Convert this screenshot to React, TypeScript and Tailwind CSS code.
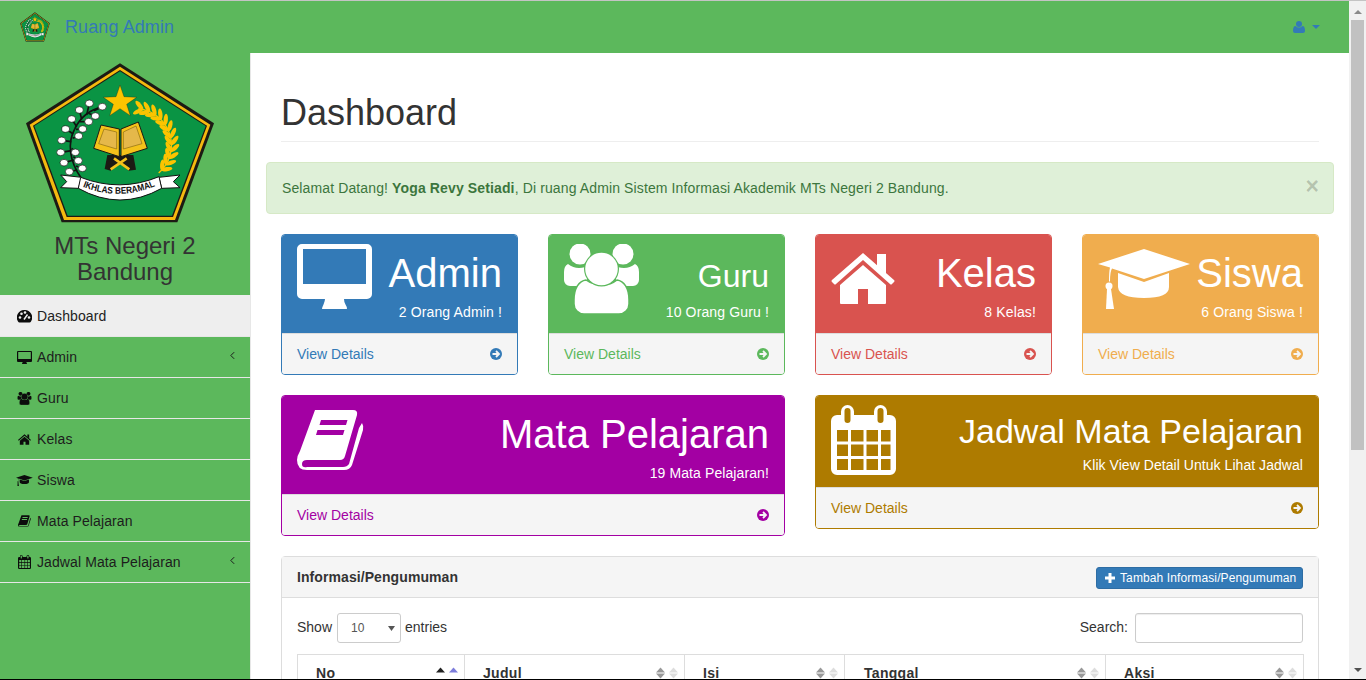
import type { ReactNode } from 'react';

type IconProps = { className?: string };

function MonitorIcon({ className }: IconProps) {
  return (
    <svg viewBox="0 0 75 65" className={className} fill="currentColor">
      <path
        fillRule="evenodd"
        d="M5 0h65a5 5 0 0 1 5 5v45a5 5 0 0 1-5 5H47q0 3 1.5 5.5t1.5 4q0 .5-1 .5H26q-1 0-1-.5t1.500-4T28 55H5a5 5 0 0 1-5-5V5a5 5 0 0 1 5-5zM6 5v35h63V5z"
      />
    </svg>
  );
}

function UsersIcon({ className }: IconProps) {
  return (
    <svg viewBox="0 0 75 70" className={className} fill="currentColor">
      <circle cx="16" cy="10" r="10.500" />
      <circle cx="59" cy="10" r="10.500" />
      <path d="M4 20q5 4 11 4 6 0 10-3l-3 21H6a6 6 0 0 1-6-6v-8q0-6 4-8z" />
      <path d="M71 20q-5 4-11 4-6 0-10-3l3 21h16a6 6 0 0 0 6-6v-8q0-6-4-8z" />
      <path
        className="stroke-[#5cb85c]"
        strokeWidth="1.500"
        d="M10 56C10 44 15 37 22 36q7 5 16 5t15-5c7 1 12 8 12 20v4a10 10 0 0 1-10 10H20a10 10 0 0 1-10-10z"
      />
      <circle cx="37.500" cy="25" r="17.500" className="fill-[#5cb85c]" />
      <circle cx="37.500" cy="25" r="16.300" />
    </svg>
  );
}

function HomeIcon({ className }: IconProps) {
  return (
    <svg viewBox="0 0 64 51" className={className} fill="currentColor">
      <path d="M46 1h9v20l-9-8z" />
      <path d="M32 0l31 27q1 1 0 2l-2 2q-1 1-2 0L32 7 5 31q-1 1-2 0l-2-2q-1-1 0-2z" />
      <path
        fillRule="evenodd"
        d="M32 12l23 20v18q0 1-1 1H10q-1 0-1-1V32zM27 36v15h10V36z"
      />
    </svg>
  );
}

function CapIcon({ className }: IconProps) {
  return (
    <svg viewBox="0 0 93 60" className={className} fill="currentColor">
      <path d="M46 0l46 15-46 15-32-10.500q-2 3-2 13h-1q0-10 1-14L0 15z" />
      <path d="M20 24l26 9 25-9v14q0 11-25 11T20 38z" />
      <circle cx="11" cy="37" r="3.500" />
      <path d="M9 40h4l3 20H8z" />
    </svg>
  );
}

function BookIcon({ className }: IconProps) {
  return (
    <svg viewBox="0 0 67 60" className={className} fill="currentColor">
      <path
        fillRule="evenodd"
        d="M18 0h38q5 0 4 5L48 46q-1 4-5 4H10q-5 0-5 4t5 3h36q4 0 6-3l10-36 3-5q2 3 1 7L55 55q-2 5-8 5H10Q0 60 0 50q0-4 3-9zM24 10l-1.500 5H49l1.500-5zM20.500 20L19 25h27l1.500-5z"
      />
    </svg>
  );
}

function CalendarIcon({ className, hole }: IconProps & { hole: string }) {
  return (
    <svg viewBox="0 0 65 70" className={className} fill="currentColor">
      <path
        fillRule="evenodd"
        d="M6 10h53a6 6 0 0 1 6 6v48a6 6 0 0 1-6 6H6a6 6 0 0 1-6-6V16a6 6 0 0 1 6-6zM6 25v11.500h11V25zm14 0v11.500h12.500V25zM35.500 25v11.500h11.500V25zm14.500 0v11.500h9.500V25zM6 39.500V51h11V39.500zm14 0V51h12.500V39.500zm15.500 0V51h11.500V39.500zm14.500 0V51h9.500V39.500zM6 54v11h11V54zm14 0v11h12.500V54zm15.500 0v11h11.500V54zm14.500 0v11h9.500V54z"
      />
      <rect x="10" y="0" width="13" height="21" rx="6.500" />
      <rect x="43" y="0" width="13" height="21" rx="6.500" />
      <rect x="13.500" y="3" width="6" height="15" rx="3" className={hole} />
      <rect x="46.500" y="3" width="6" height="15" rx="3" className={hole} />
    </svg>
  );
}

function GaugeIcon({ className }: IconProps) {
  return (
    <svg viewBox="0 0 15 13" className={className}>
      <path d="M7.500 0a7.500 7.500 0 0 1 6.500 11.500q-.5 1-1.500 1h-10q-1 0-1.500-1A7.500 7.500 0 0 1 7.500 0z" fill="currentColor" />
      <circle cx="3" cy="7.500" r="1.300" fill="#eee" />
      <circle cx="4.500" cy="3.800" r="1.300" fill="#eee" />
      <circle cx="8" cy="2.500" r="1.300" fill="#eee" />
      <circle cx="12" cy="7.500" r="1.300" fill="#eee" />
      <path d="M7 9.500l3.500-5" stroke="#eee" strokeWidth="1.500" />
    </svg>
  );
}

function ArrowCircle({ className }: IconProps) {
  return (
    <svg viewBox="0 0 12 12" className={className}>
      <circle cx="6" cy="6" r="6" fill="currentColor" />
      <path d="M2.500 6h6M6 3l3 3-3 3" fill="none" stroke="#f5f5f5" strokeWidth="1.800" />
    </svg>
  );
}

function SortCarets({ active }: { active?: boolean }) {
  return (
    <svg viewBox="0 0 22 12" className="h-[12px] w-[22px] shrink-0">
      <path d="M0 5.500L4.500 .5 9 5.500z" fill={active ? '#222222' : '#999999'} />
      <path d="M13 5.500L17.500 .5 22 5.500z" fill={active ? '#7d7ddb' : '#dddddd'} />
      {!active && <path d="M0 6.500l4.500 5 4.500-5z" fill="#999999" />}
      {!active && <path d="M13 6.500l4.500 5 4.500-5z" fill="#dddddd" />}
    </svg>
  );
}

// blob x, y, then where its twig joins the stem
const cottonBlobs = [
  [208, 130, 200, 165], [178, 150, 185, 178], [155, 177, 170, 200], [137, 207, 160, 222],
  [125, 241, 154, 245], [122, 277, 155, 272], [132, 308, 162, 300], [148, 335, 172, 330],
  [247, 140, 222, 152], [226, 168, 205, 160], [206, 185, 180, 185], [188, 207, 168, 208],
  [176, 228, 158, 235], [166, 277, 155, 265], [175, 302, 160, 290], [187, 325, 168, 318],
];

const wheatAngles = [-78, -67, -56, -45, -34, -23, -12, -1, 10, 21, 32, 43];

function Emblem({ className, viewBox }: { className?: string; viewBox: string }) {
  return (
    <svg viewBox={viewBox} preserveAspectRatio="none" className={className}>
      <polygon points="300,10 582,190 472,487 125,487 18,190" fill="#1c1a14" />
      <polygon points="300,20 571,194 465,480 132,480 29,194" fill="#f5b90f" />
      <polygon points="300,30 561,197 459,471 140,471 39,197" fill="#1c1a14" />
      <polygon points="300,34 557,198 456,467 143,467 43,198" fill="#0a9444" />
      <polygon
        points="300,75 312,110 350,112 320,133 331,167 300,146 269,167 280,133 250,112 288,110"
        fill="#fcc400"
        stroke="#1c1a14"
        strokeWidth="1"
      />
      <path d="M182 352C150 305 140 250 165 205 185 165 215 148 248 140" fill="none" stroke="#111" strokeWidth="5" />
      {cottonBlobs.map(([x, y, sx, sy]) => (
        <g key={`${x}-${y}`}>
          <path d={`M${x} ${y}L${sx} ${sy}`} stroke="#111" strokeWidth="5" />
          <ellipse cx={x} cy={y} rx="12" ry="10" fill="#fff" stroke="#111" strokeWidth="2" />
        </g>
      ))}
      <path d="M355 146A110 110 0 0 1 416 339" fill="none" stroke="#fcc400" strokeWidth="4" />
      {wheatAngles.map((a) => {
        const rad = (a * Math.PI) / 180;
        const x = 345 + 110 * Math.cos(rad);
        const y = 255 + 110 * Math.sin(rad);
        return (
          <g key={a} transform={`translate(${x} ${y}) rotate(${a - 90})`} fill="#fcc400">
            <ellipse cx="15" cy="0" rx="17" ry="6.500" transform="rotate(38)" />
            <ellipse cx="15" cy="0" rx="17" ry="6.500" transform="rotate(-38)" />
          </g>
        );
      })}
      <path d="M262 285h78l8 44-22 3-26-22-28 22-18-5z" fill="#1c1a14" />
      <path d="M272 328l48-33M328 328l-46-33" stroke="#f5c21a" strokeWidth="8" />
      <polygon points="243,195 298,207 298,290 221,265" fill="#f5c21a" stroke="#1c1a14" strokeWidth="3" />
      <polygon points="355,186 303,207 303,290 382,265" fill="#f5c21a" stroke="#1c1a14" strokeWidth="3" />
      <polygon points="252,207 290,216 290,267 236,251" fill="#e5b84a" stroke="#8a6a10" strokeWidth="2" />
      <polygon points="348,198 310,216 310,267 366,251" fill="#e5b84a" stroke="#8a6a10" strokeWidth="2" />
      <path d="M122 345l63 7-10 33-53-2 18-18z" fill="#fff" stroke="#111" strokeWidth="3" />
      <path d="M480 345l-63 7 8 33 55-2-20-18z" fill="#fff" stroke="#111" strokeWidth="3" />
      <path d="M182 352q118 46 235-2l8 35q-125 70-250 0z" fill="#fff" stroke="#111" strokeWidth="3" />
      <path id="ribbon-line" d="M188 380q112 46 228-6" fill="none" />
      <text className="font-['Liberation_Sans',sans-serif] font-bold" fontSize="28" fill="#111">
        <textPath href="#ribbon-line" textLength="224" lengthAdjust="spacingAndGlyphs">
          IKHLAS BERAMAL
        </textPath>
      </text>
    </svg>
  );
}

const navItems: { label: string; icon: ReactNode; caret?: boolean; active?: boolean }[] = [
  { label: 'Dashboard', icon: <GaugeIcon className="h-[13px] w-[15px]" />, active: true },
  { label: 'Admin', icon: <MonitorIcon className="h-[13px] w-[15px]" />, caret: true },
  { label: 'Guru', icon: <UsersIcon className="h-[13px] w-[15px]" /> },
  { label: 'Kelas', icon: <HomeIcon className="h-[11px] w-[13px]" /> },
  { label: 'Siswa', icon: <CapIcon className="h-[11px] w-[17px]" /> },
  { label: 'Mata Pelajaran', icon: <BookIcon className="h-[12px] w-[13px]" /> },
  {
    label: 'Jadwal Mata Pelajaran',
    icon: <CalendarIcon className="h-[14px] w-[13px]" hole="fill-[#5cb85c]" />,
    caret: true,
  },
];

function Sidebar() {
  return (
    <aside className="w-[250px] shrink-0 bg-[#5cb85c]">
      <Emblem viewBox="0 0 600 510" className="ml-[20px] mt-[7px] block h-[170px] w-[200px]" />
      <h2 className="pb-[10px] pt-[3px] text-center text-2xl leading-[26px] text-[#333]">
        MTs Negeri 2
        <br />
        Bandung
      </h2>
      <ul className="border-t border-[#eeeeee]">
        {navItems.map((item) => (
          <li
            key={item.label}
            className={`flex h-[41px] items-center border-b border-[#e7e7e7] pl-[15px] pr-[15px] text-sm tracking-[0.1px] ${
              item.active ? 'bg-[#eeeeee] text-[#222]' : 'text-[#1c1c1c]'
            }`}
          >
            <span className="flex w-[22px] shrink-0 justify-center pr-[3px] text-[#0c0c0c]">{item.icon}</span>
            <span>{item.label}</span>
            {item.caret && (
              <svg viewBox="0 0 6 10" className="ml-auto mb-[4px] h-[9px] w-[5px]">
                <path d="M5 1L1 5l4 4" fill="none" stroke="#1c1c1c" strokeWidth="1.200" />
              </svg>
            )}
          </li>
        ))}
      </ul>
    </aside>
  );
}

type CardProps = {
  title: string;
  titleClass: string;
  sub: string;
  subClass?: string;
  icon: ReactNode;
  headClass: string;
  border: string;
  bg: string;
  text: string;
};

function StatCard({ title, titleClass, sub, subClass = 'tracking-[0.14px]', icon, headClass, border, bg, text }: CardProps) {
  return (
    <div className={`overflow-hidden rounded border ${border}`}>
      <div className={`flex justify-between px-[15px] text-white ${bg} ${headClass}`}>
        {icon}
        <div className="flex flex-1 flex-col items-end justify-end">
          <div className={titleClass}>{title}</div>
          <div className={`text-sm leading-5 ${subClass}`}>{sub}</div>
        </div>
      </div>
      <div className={`flex h-[41px] items-center justify-between border-t border-[#dddddd] bg-[#f5f5f5] px-[15px] text-sm ${text}`}>
        <span>View Details</span>
        <ArrowCircle className="h-[12px] w-[12px]" />
      </div>
    </div>
  );
}

const columns = [
  { label: 'No', width: 'w-[167px] pl-[18px]', active: true },
  { label: 'Judul', width: 'w-[220px] pl-[18px]' },
  { label: 'Isi', width: 'w-[160px] pl-[18px]' },
  { label: 'Tanggal', width: 'w-[261px] pl-[19px]' },
  { label: 'Aksi', width: 'w-[198px] pl-[18px]' },
];

function AnnouncementPanel() {
  return (
    <div className="rounded border border-[#dddddd]">
      <div className="flex h-[41px] items-center justify-between border-b border-[#dddddd] bg-[#f5f5f5] px-[15px]">
        <h3 className="text-sm font-bold tracking-[0.08px] text-[#333]">Informasi/Pengumuman</h3>
        <button className="mt-px flex h-[22px] w-[207px] items-center gap-[5px] rounded-[3px] border border-[#2e6da4] bg-[#337ab7] pl-[8px] text-xs tracking-[0.11px] text-white">
          <svg viewBox="0 0 10 10" className="h-[10px] w-[10px]">
            <path d="M5 0v10M0 5h10" stroke="currentColor" strokeWidth="3" />
          </svg>
          Tambah Informasi/Pengumuman
        </button>
      </div>
      <div className="p-[15px]">
        <div className="mb-[11px] flex items-center justify-between text-sm text-[#333]">
          <div className="flex items-center">
            <span className="-mt-[2px]">Show</span>
            <div className="relative ml-[5px] mr-[4px]">
              <select className="block h-[30px] w-[64px] appearance-none rounded-[3px] border border-[#cccccc] bg-white px-[13px] text-xs text-[#555]">
                <option>10</option>
              </select>
              <svg viewBox="0 0 7 5" className="absolute right-[6px] top-[13px] h-[5px] w-[7px]">
                <path d="M0 0h7L3.500 5z" fill="#555555" />
              </svg>
            </div>
            <span className="-mt-[2px]">entries</span>
          </div>
          <label className="flex items-center gap-[7px]">
            <span className="-mt-[2px]">Search:</span>
            <input className="h-[30px] w-[168px] rounded-[3px] border border-[#cccccc] bg-white shadow-[inset_0_1px_1px_rgba(0,0,0,0.075)]" />
          </label>
        </div>
        <table className="w-[1006px] table-fixed border-collapse text-sm text-[#333]">
          <thead>
            <tr>
              {columns.map((col) => (
                <th key={col.label} className={`border border-[#dddddd] pb-[8px] pr-[6px] pt-[8px] text-left font-bold ${col.width}`}>
                  <div className="flex justify-between">
                    <span className="tracking-[0.3px]">{col.label}</span>
                    <span className="mt-[4px]">
                      <SortCarets active={col.active} />
                    </span>
                  </div>
                </th>
              ))}
            </tr>
          </thead>
        </table>
      </div>
    </div>
  );
}

function Scrollbar() {
  return (
    <div className="flex w-[17px] shrink-0 flex-col items-center bg-[#f1f1f1]">
      <svg viewBox="0 0 8 4" className="mb-[6px] mt-[9px] h-[4px] w-[8px]">
        <path d="M0 4l4-4 4 4z" fill="#8a8a8a" />
      </svg>
      <div className="h-[430px] w-[13px] bg-[#c1c1c1]" />
      <svg viewBox="0 0 8 4" className="mb-[7px] mt-auto h-[4px] w-[8px]">
        <path d="M0 0l4 4 4-4z" fill="#505050" />
      </svg>
    </div>
  );
}

export default function App() {
  return (
    <div className="flex h-[680px] flex-col overflow-hidden bg-white font-['Liberation_Sans',Arial,sans-serif] text-[#333]">
      <div className="h-px shrink-0 bg-[#c4c4c4]" />
      <div className="flex min-h-0 flex-1">
        <div className="flex min-w-0 flex-1 flex-col">
          <nav className="flex h-[52px] shrink-0 items-center bg-[#5cb85c] pl-[20px] pr-[29px]">
            <Emblem viewBox="15 5 572 490" className="h-[30px] w-[30px]" />
            <span className="ml-[15px] text-lg tracking-[0.1px] text-[#337ab7]">Ruang Admin</span>
            <div className="ml-auto flex items-center gap-[7px] text-[#337ab7]">
              <svg viewBox="0 0 12 12" className="h-[12px] w-[12px]">
                <circle cx="6" cy="3" r="3" fill="currentColor" />
                <path d="M0 10q0-5 2.500-5 1.500 1.500 3.500 1.500T9.500 5Q12 5 12 10q0 2-2 2H2q-2 0-2-2z" fill="currentColor" />
              </svg>
              <svg viewBox="0 0 8 4" className="h-[4px] w-[8px]">
                <path d="M0 0h8L4 4z" fill="currentColor" />
              </svg>
            </div>
          </nav>
          <div className="flex min-h-0 flex-1">
            <Sidebar />
            <main className="min-w-0 flex-1 border-l border-[#e7e7e7] px-[15px] pt-[40px]">
              <div className="mx-[15px] mb-[20px] border-b border-[#eeeeee] pb-[8px]">
                <h1 className="text-4xl leading-[40px] text-[#333]">Dashboard</h1>
              </div>
              <div className="mb-[20px] flex h-[52px] items-center justify-between rounded border border-[#d6e9c6] bg-[#dff0d8] pl-[15px] pr-[14px] text-sm tracking-[0.12px] text-[#3c763d]">
                <p>
                  Selamat Datang! <b className="tracking-[0.13px]">Yoga Revy Setiadi</b>, Di ruang Admin Sistem Informasi Akademik MTs Negeri 2 Bandung.
                </p>
                <span className="mb-[3px] text-[23px] font-bold leading-none text-black/20">×</span>
              </div>
              <div className="px-[15px]">
                <div className="mb-[20px] grid grid-cols-4 gap-[30px]">
                  <StatCard
                    title="Admin"
                    titleClass="text-[40px] leading-[57px]"
                    sub="2 Orang Admin !"
                    icon={<MonitorIcon className="mt-[9px] h-[65px] w-[75px] shrink-0" />}
                    headClass="h-[98px] pb-[11px]"
                    border="border-[#337ab7]"
                    bg="bg-[#337ab7]"
                    text="text-[#337ab7]"
                  />
                  <StatCard
                    title="Guru"
                    titleClass="text-[32px] leading-[52px]"
                    sub="10 Orang Guru !"
                    icon={<UsersIcon className="mt-[9px] h-[70px] w-[75px] shrink-0" />}
                    headClass="h-[98px] pb-[11px]"
                    border="border-[#5cb85c]"
                    bg="bg-[#5cb85c]"
                    text="text-[#5cb85c]"
                  />
                  <StatCard
                    title="Kelas"
                    titleClass="text-[40px] leading-[57px]"
                    sub="8 Kelas!"
                    icon={<HomeIcon className="mt-[18px] h-[51px] w-[64px] shrink-0" />}
                    headClass="h-[98px] pb-[11px]"
                    border="border-[#d9534f]"
                    bg="bg-[#d9534f]"
                    text="text-[#d9534f]"
                  />
                  <StatCard
                    title="Siswa"
                    titleClass="text-[40px] leading-[57px]"
                    sub="6 Orang Siswa !"
                    icon={<CapIcon className="mt-[14px] h-[60px] w-[93px] shrink-0" />}
                    headClass="h-[98px] pb-[11px]"
                    border="border-[#f0ad4e]"
                    bg="bg-[#f0ad4e]"
                    text="text-[#f0ad4e]"
                  />
                </div>
                <div className="mb-[20px] grid grid-cols-2 items-start gap-[30px]">
                  <StatCard
                    title="Mata Pelajaran"
                    titleClass="text-[40px] leading-[57px]"
                    sub="19 Mata Pelajaran!"
                    subClass="tracking-[0.1px]"
                    icon={<BookIcon className="mt-[14px] h-[60px] w-[67px] shrink-0" />}
                    headClass="h-[98px] pb-[11px]"
                    border="border-[#a300a3]"
                    bg="bg-[#a300a3]"
                    text="text-[#a300a3]"
                  />
                  <StatCard
                    title="Jadwal Mata Pelajaran"
                    titleClass="text-[34px] leading-[48px]"
                    sub="Klik View Detail Untuk Lihat Jadwal"
                    subClass="tracking-[0.05px]"
                    icon={<CalendarIcon className="mt-[9px] h-[70px] w-[65px] shrink-0" hole="fill-[#ae7b00]" />}
                    headClass="h-[91px] pb-[12px]"
                    border="border-[#ae7b00]"
                    bg="bg-[#ae7b00]"
                    text="text-[#ae7b00]"
                  />
                </div>
                <AnnouncementPanel />
              </div>
            </main>
          </div>
        </div>
        <Scrollbar />
      </div>
      <div className="h-px shrink-0 bg-black" />
    </div>
  );
}
